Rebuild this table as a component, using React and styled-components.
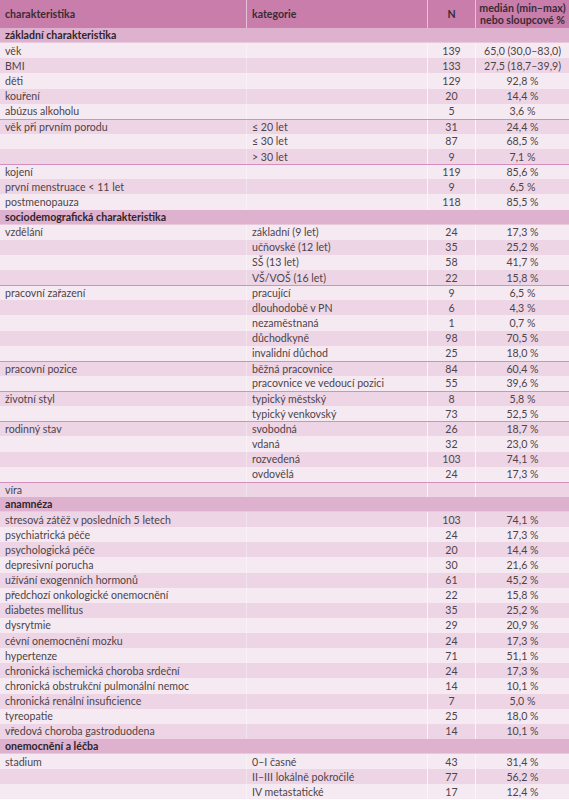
import React from 'react';
import styled, { createGlobalStyle } from 'styled-components';

const GlobalStyle = createGlobalStyle`
    html, body {
        margin: 0;
        padding: 0;
        background: #ffffff;
    }
    body {
        font-family: Lato, "Open Sans", sans-serif;
    }
`;

const Table = styled.div`
    width: 569px;
    height: 800px;
    overflow: hidden;
    font-size: 10.6px;
    color: #4d4449;
`;

const Head = styled.div`
    display: grid;
    grid-template-columns: 247px 181px 48px 1fr;
    height: 28px;
    background: #c87dab;
    color: #3a2b34;
    font-weight: 700;
`;

const HeadCell = styled.div`
    display: flex;
    align-items: center;
    justify-content: ${p => (p.center ? 'center' : 'flex-start')};
    text-align: ${p => (p.center ? 'center' : 'left')};
    padding-left: ${p => (p.center ? '0' : '5px')};
    line-height: 11.5px;
    padding-top: 1px;
    border-right: ${p => (p.last ? 'none' : '1px solid #e6c2d9')};
`;

const Section = styled.div`
    height: 15.14px;
    box-sizing: border-box;
    display: flex;
    align-items: center;
    padding-left: 5px;
    background: #deb1cf;
    color: #2f252b;
    font-weight: 700;
    border-bottom: 1px solid #e9cadd;
`;

const Row = styled.div`
    display: grid;
    grid-template-columns: 247px 181px 48px 1fr;
    height: 15.14px;
    box-sizing: border-box;
    background: ${p => (p.dark ? '#edd5e5' : '#f6eaf2')};
    border-top: ${p => (p.sep ? '1.5px solid #d38fbd' : 'none')};
`;

const Cell = styled.div`
    display: flex;
    align-items: center;
    justify-content: ${p => (p.center ? 'center' : 'flex-start')};
    padding-left: ${p => (p.center ? '0' : '5px')};
    white-space: nowrap;
    border-right: ${p => (p.last ? 'none' : p.strong ? '1px solid #fbf4f8' : '1px solid rgba(255,255,255,0.35)')};
`;

const data = [
    { title: 'základní charakteristika', start: false, rows: [
        ['věk', '', '139', '65,0 (30,0–83,0)'],
        ['BMI', '', '133', '27,5 (18,7–39,9)'],
        ['děti', '', '129', '92,8 %'],
        ['kouření', '', '20', '14,4 %'],
        ['abúzus alkoholu', '', '5', '3,6 %'],
        ['věk při prvním porodu', '≤ 20 let', '31', '24,4 %', true],
        ['', '≤ 30 let', '87', '68,5 %'],
        ['', '> 30 let', '9', '7,1 %'],
        ['kojení', '', '119', '85,6 %', true],
        ['první menstruace < 11 let', '', '9', '6,5 %'],
        ['postmenopauza', '', '118', '85,5 %'],
    ] },
    { title: 'sociodemografická charakteristika', start: false, rows: [
        ['vzdělání', 'základní (9 let)', '24', '17,3 %'],
        ['', 'učňovské (12 let)', '35', '25,2 %'],
        ['', 'SŠ (13 let)', '58', '41,7 %'],
        ['', 'VŠ/VOŠ (16 let)', '22', '15,8 %'],
        ['pracovní zařazení', 'pracující', '9', '6,5 %', true],
        ['', 'dlouhodobě v PN', '6', '4,3 %'],
        ['', 'nezaměstnaná', '1', '0,7 %'],
        ['', 'důchodkyně', '98', '70,5 %'],
        ['', 'invalidní důchod', '25', '18,0 %'],
        ['pracovní pozice', 'běžná pracovnice', '84', '60,4 %', true],
        ['', 'pracovnice ve vedoucí pozici', '55', '39,6 %'],
        ['životní styl', 'typický městský', '8', '5,8 %', true],
        ['', 'typický venkovský', '73', '52,5 %'],
        ['rodinný stav', 'svobodná', '26', '18,7 %', true],
        ['', 'vdaná', '32', '23,0 %'],
        ['', 'rozvedená', '103', '74,1 %'],
        ['', 'ovdovělá', '24', '17,3 %'],
        ['víra', '', '', '', true],
    ] },
    { title: 'anamnéza', start: true, rows: [
        ['stresová zátěž v posledních 5 letech', '', '103', '74,1 %'],
        ['psychiatrická péče', '', '24', '17,3 %'],
        ['psychologická péče', '', '20', '14,4 %'],
        ['depresivní porucha', '', '30', '21,6 %'],
        ['užívání exogenních hormonů', '', '61', '45,2 %'],
        ['předchozí onkologické onemocnění', '', '22', '15,8 %'],
        ['diabetes mellitus', '', '35', '25,2 %'],
        ['dysrytmie', '', '29', '20,9 %'],
        ['cévní onemocnění mozku', '', '24', '17,3 %'],
        ['hypertenze', '', '71', '51,1 %'],
        ['chronická ischemická choroba srdeční', '', '24', '17,3 %'],
        ['chronická obstrukční pulmonální nemoc', '', '14', '10,1 %'],
        ['chronická renální insuficience', '', '7', '5,0 %'],
        ['tyreopatie', '', '25', '18,0 %'],
        ['vředová choroba gastroduodena', '', '14', '10,1 %'],
    ] },
    { title: 'onemocnění a léčba', start: false, rows: [
        ['stadium', '0–I časné', '43', '31,4 %'],
        ['', 'II–III lokálně pokročilé', '77', '56,2 %'],
        ['', 'IV metastatické', '17', '12,4 %'],
    ] },
];

export default function App() {
    return (
        <>
            <GlobalStyle />
            <Table>
                <Head>
                    <HeadCell>charakteristika</HeadCell>
                    <HeadCell>kategorie</HeadCell>
                    <HeadCell center>N</HeadCell>
                    <HeadCell center last>medián (min–max)<br />nebo sloupcové %</HeadCell>
                </Head>
                {data.map(section => (
                    <React.Fragment key={section.title}>
                        <Section>{section.title}</Section>
                        {section.rows.map((r, i) => (
                            <Row key={i} dark={(i % 2 === 1) !== section.start} sep={r[4]}>
                                <Cell>{r[0]}</Cell>
                                <Cell strong>{r[1]}</Cell>
                                <Cell center strong>{r[2]}</Cell>
                                <Cell center last>{r[3]}</Cell>
                            </Row>
                        ))}
                    </React.Fragment>
                ))}
            </Table>
        </>
    );
}
